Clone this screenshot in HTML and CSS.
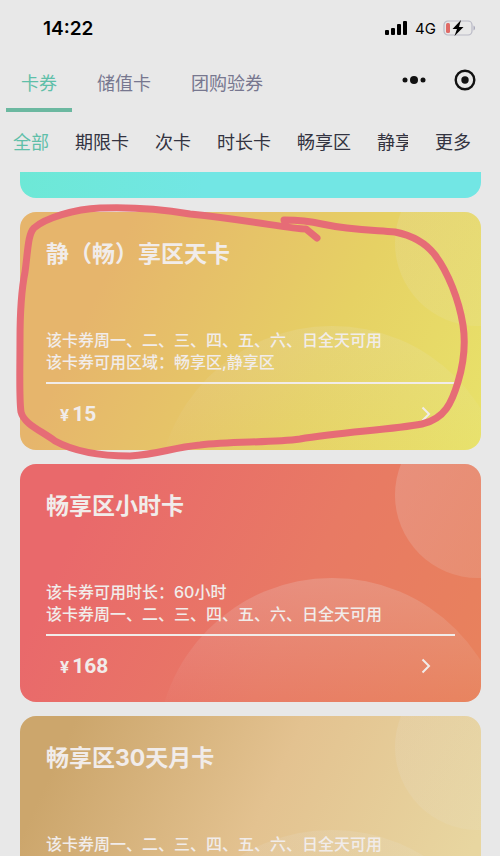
FILE: index.html
```
<!DOCTYPE html>
<html lang="zh-CN">
<head>
    <meta charset="UTF-8">
    <meta name="viewport" content="width=device-width, initial-scale=1.0">
    <title>卡券</title>
    <link rel="stylesheet" href="styles.css">
</head>
<body>
    <!-- Status Bar -->
    <div class="status-bar">
        <span class="status-time">14:22</span>
        <div class="status-icons">
            <svg class="signal" width="23" height="14" viewBox="0 0 23 14">
                <rect x="0" y="9" width="4" height="5" rx="1"/>
                <rect x="6" y="7" width="4" height="7" rx="1"/>
                <rect x="12" y="3" width="4" height="11" rx="1"/>
                <rect x="18" y="0" width="4" height="14" rx="1"/>
            </svg>
            <span class="network">4G</span>
            <svg class="battery" width="32" height="16" viewBox="0 0 32 16">
                <rect x="1" y="1" width="28" height="14" rx="4" fill="none" stroke="#b9b9c6" stroke-width="1.2"/>
                <path d="M30.5 5.5v5c2-.8 2-4.200 0-5z" fill="#a9a9bb"/>
                <rect x="3" y="3" width="4" height="10" rx="1.500" fill="#e06a66"/>
                <path d="M18 0L9.500 9h4.500l-2.500 7L20.500 7H16z" fill="#000"/>
            </svg>
        </div>
    </div>

    <!-- Main Tabs -->
    <header class="top-bar">
        <nav class="tabs">
            <a href="#" class="tab active">卡券</a>
            <a href="#" class="tab">储值卡</a>
            <a href="#" class="tab">团购验券</a>
        </nav>
        <div class="capsule">
            <button type="button" class="icon-button" aria-label="菜单">
                <svg width="24" height="22" viewBox="0 0 24 22">
                    <circle cx="3" cy="11" r="2.500"/>
                    <circle cx="12" cy="11" r="4"/>
                    <circle cx="21" cy="11" r="2.500"/>
                </svg>
            </button>
            <button type="button" class="icon-button" aria-label="关闭">
                <svg width="22" height="22" viewBox="0 0 22 22">
                    <circle cx="11" cy="11" r="9.300" fill="none" stroke="#111" stroke-width="2.400"/>
                    <circle cx="11" cy="11" r="3.700"/>
                </svg>
            </button>
        </div>
    </header>

    <!-- Card Type Filter -->
    <nav class="filter-bar">
        <div class="filters">
            <a href="#" class="filter active">全部</a>
            <a href="#" class="filter">期限卡</a>
            <a href="#" class="filter">次卡</a>
            <a href="#" class="filter">时长卡</a>
            <a href="#" class="filter">畅享区</a>
            <a href="#" class="filter">静享区</a>
        </div>
        <a href="#" class="filter filter-more">更多</a>
    </nav>

    <!-- Card List -->
    <main class="card-list">
        <div class="card-end"></div>

        <div class="marked">
            <article class="card card-yellow">
                <h2 class="card-title">静（畅）享区天卡</h2>
                <div class="card-desc">
                    <p>该卡券周一、二、三、四、五、六、日全天可用</p>
                    <p>该卡券可用区域：畅享区,静享区</p>
                </div>
                <div class="card-footer">
                    <span class="price"><small>¥</small>15</span>
                    <a href="#" class="card-link" aria-label="查看">
                        <svg width="10" height="16" viewBox="0 0 10 16"><path d="M1.500 1.500L8 8l-6.500 6.500"/></svg>
                    </a>
                </div>
            </article>
            <svg class="pen-mark" viewBox="20 212 461 238" preserveAspectRatio="none">
                <path d="M317 238L306 229C290 229 250 220 190 214C155 208 125 207 100 208C75 209 45 218 34 228C28 234 28 250 25 272C21 292 20 310 20 340C20 370 19 398 21 412C24 424 40 430 55 441C75 452 100 456 130 456C160 454 170 448 200 445C230 441 270 443 300 439C340 432 390 430 422 424C445 419 452 402 458 382C464 362 466 345 463 325C459 300 448 272 435 255C425 242 410 235 395 232C370 230 350 230 322 224C305 220 295 220 284 220"/>
            </svg>
        </div>

        <article class="card card-red">
            <h2 class="card-title">畅享区小时卡</h2>
            <div class="card-desc">
                <p>该卡券可用时长：60小时</p>
                <p>该卡券周一、二、三、四、五、六、日全天可用</p>
            </div>
            <div class="card-footer">
                <span class="price"><small>¥</small>168</span>
                <a href="#" class="card-link" aria-label="查看">
                    <svg width="10" height="16" viewBox="0 0 10 16"><path d="M1.500 1.500L8 8l-6.500 6.500"/></svg>
                </a>
            </div>
        </article>

        <article class="card card-gold">
            <h2 class="card-title">畅享区30天月卡</h2>
            <div class="card-desc">
                <p>该卡券周一、二、三、四、五、六、日全天可用</p>
            </div>
        </article>
    </main>
</body>
</html>
```
FILE: styles.css
```
* {
    margin: 0;
    padding: 0;
    box-sizing: border-box;
}

body {
    display: flex;
    flex-direction: column;
    height: 100vh;
    overflow: hidden;
    background-color: #e8e8e8;
    font-family: Inter, "Noto Sans CJK SC", sans-serif;
    color: #333340;
}

a {
    color: inherit;
    text-decoration: none;
}

/* Status Bar */
.status-bar {
    display: flex;
    flex-shrink: 0;
    justify-content: space-between;
    align-items: center;
    height: 56px;
    padding: 0 25px 0 43px;
    color: #000;
}

.status-time {
    font-size: 19px;
    font-weight: 600;
}

.status-icons {
    display: flex;
    align-items: center;
    gap: 7px;
}

.network {
    font-size: 15px;
}

/* Main Tabs */
.top-bar {
    display: flex;
    flex-shrink: 0;
    justify-content: space-between;
    height: 56px;
    padding: 0 24px 0 6px;
}

.tabs {
    display: flex;
    gap: 10px;
}

.tab {
    padding: 4px 15px 0;
    border-bottom: 4px solid transparent;
    font-size: 18px;
    line-height: 48px;
    color: #77778f;
}

.tab.active {
    color: #5fbfa9;
    border-bottom-color: #6bb8a0;
}

.capsule {
    display: flex;
    align-items: center;
    gap: 28px;
    height: 48px;
}

.icon-button {
    display: flex;
    border: none;
    background: none;
    cursor: pointer;
}

.icon-button svg {
    fill: #111;
}

/* Card Type Filter */
.filter-bar {
    display: flex;
    flex-shrink: 0;
    height: 60px;
    padding-right: 29px;
    line-height: 62px;
}

.filters {
    display: flex;
    flex: 1;
    gap: 26px;
    min-width: 0;
    padding-left: 13px;
    overflow: hidden;
}

.filter {
    flex-shrink: 0;
    font-size: 18px;
}

.filter.active {
    color: #5fbfa9;
}

.filter-more {
    padding-left: 27px;
}

/* Card List */
.card-list {
    display: flex;
    flex: 1;
    flex-direction: column;
    gap: 14px;
    min-height: 0;
    padding: 0 19px 0 20px;
    overflow: hidden;
}

.card-end {
    flex-shrink: 0;
    height: 26px;
    border-radius: 0 0 16px 16px;
    background: linear-gradient(90deg, #6de8d6, #72e6e4 40%);
}

.marked {
    position: relative;
    flex-shrink: 0;
}

.pen-mark {
    position: absolute;
    z-index: 2;
    top: 0;
    left: 0;
    width: 100%;
    height: 100%;
    overflow: visible;
    fill: none;
    stroke: #e66c76;
    stroke-width: 7;
    stroke-linecap: round;
    stroke-linejoin: round;
    pointer-events: none;
}

.card {
    position: relative;
    flex-shrink: 0;
    height: 238px;
    padding: 25px 26px 0;
    border-radius: 16px;
    overflow: hidden;
    color: #f1ecea;
}

/* light bubbles behind the text */
.card::before,
.card::after {
    content: "";
    position: absolute;
    border-radius: 50%;
}

.card::before {
    top: -52px;
    right: -80px;
    width: 166px;
    height: 166px;
    background: linear-gradient(120deg, rgba(232, 232, 232, 0.2), rgba(232, 232, 232, 0.1));
}

.card::after {
    top: 114px;
    right: -26px;
    width: 350px;
    height: 350px;
    background: linear-gradient(rgba(232, 232, 232, 0.2), rgba(232, 232, 232, 0) 40%);
}

.card > * {
    position: relative;
    z-index: 1;
}

.card-yellow {
    background: linear-gradient(115deg, #e6b56c 20%, #e6d164 65%, #e8e26a);
}

.card-red {
    background: linear-gradient(115deg, #e9696b 15%, #e87a64 60%, #e8825c);
}

.card-gold {
    background: linear-gradient(115deg, #cca66c 10%, #e3c290 50%, #e8d6a0 90%);
}

.card-yellow::before,
.card-yellow::after,
.card-gold::before,
.card-gold::after {
    opacity: 0.7;
}

.card-title {
    font-size: 23px;
    font-weight: 700;
    line-height: 34px;
}

.card-desc {
    min-height: 46px;
    margin-top: 58px;
    font-size: 16px;
    font-weight: 500;
    line-height: 22px;
}

.card-footer {
    display: flex;
    justify-content: space-between;
    align-items: center;
    height: 62px;
    margin-top: 7px;
    padding: 0 24px 0 14px;
    border-top: 2px solid #f1ecea;
}

.price {
    font-family: Roboto, sans-serif;
    font-size: 21px;
    font-weight: 700;
}

.price small {
    margin-right: 3px;
    font-size: 17px;
}

.card-link {
    display: flex;
}

.card-link svg {
    fill: none;
    stroke: #f1ecea;
    stroke-width: 2;
}
```
